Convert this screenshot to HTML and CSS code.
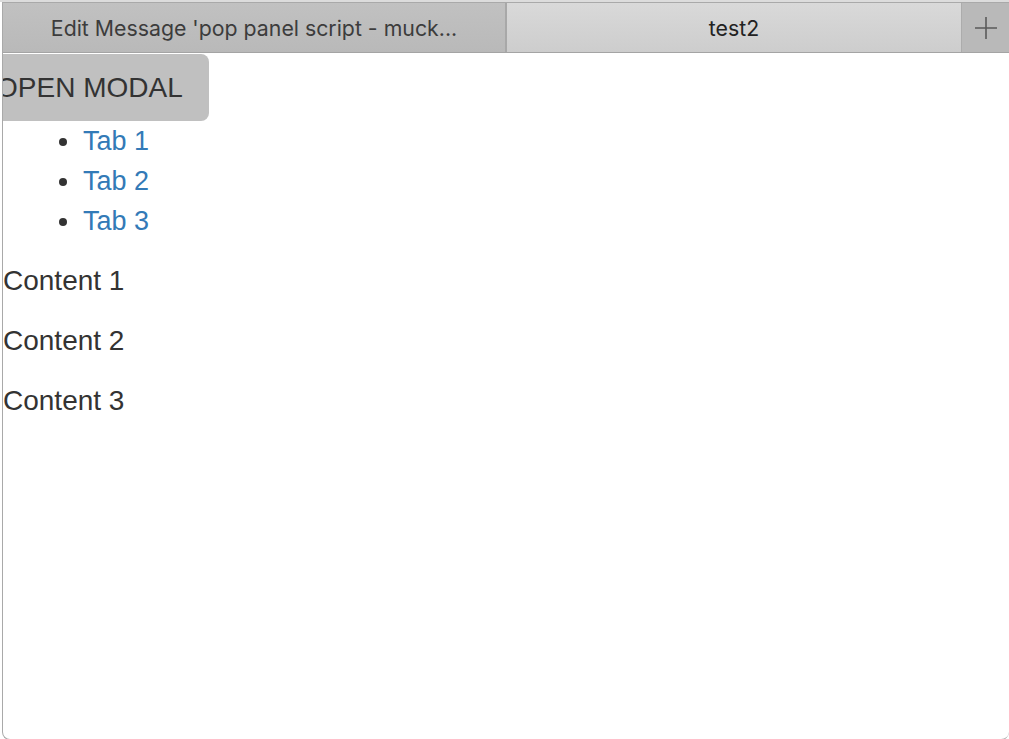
FILE: index.html
```html
<!DOCTYPE html>
<html>
<head>
<meta charset="utf-8">
<link rel="stylesheet" href="styles.css">
</head>
<body>
<div class="window">
  <div class="tabbar">
    <div class="tab tab-inactive">Edit Message 'pop panel script - muck...</div>
    <div class="tab tab-active">test2</div>
    <div class="tab-add">
      <svg width="24" height="24" viewBox="0 0 24 24"><path d="M12 1V23M1 12H23" stroke="#5a5a5a" stroke-width="1.6" fill="none"/></svg>
    </div>
  </div>
  <div class="content">
    <button class="open-modal">OPEN MODAL</button>
    <ul class="tab-list">
      <li><a href="#">Tab 1</a></li>
      <li><a href="#">Tab 2</a></li>
      <li><a href="#">Tab 3</a></li>
    </ul>
    <p class="pane">Content 1</p>
    <p class="pane">Content 2</p>
    <p class="pane">Content 3</p>
  </div>
</div>
</body>
</html>
```
FILE: styles.css
```css
html, body {
  margin: 0;
  padding: 0;
  background: #ffffff;
  height: 100%;
  overflow: hidden;
}
body {
  padding: 2px 0 0 2px;
  box-sizing: border-box;
  background: linear-gradient(#dcdcdc, #dcdcdc) top/100% 2px no-repeat, #fff;
}
.window {
  height: 736px;
  border: 1px solid #a9a9a9;
  border-right: none;
  border-radius: 0 0 8px 8px;
  background: #fff;
  overflow: hidden;
  display: flex;
  flex-direction: column;
  font-family: "Liberation Sans", Arial, sans-serif;
}
.tabbar {
  height: 49px;
  flex: none;
  display: flex;
  border-bottom: 1px solid #a4a4a4;
  font-family: Inter, "Noto Sans", sans-serif;
  font-size: 21.3px;
}
.tab {
  display: flex;
  align-items: center;
  justify-content: center;
  white-space: nowrap;
}
.tab-inactive {
  width: 502px;
  background: linear-gradient(#c1c1c1, #b9b9b9);
  color: #3c3c3c;
  border-right: 2px solid #a8a8a8;
}
.tab-active {
  width: 454px;
  background: linear-gradient(#d9d9d9, #cdcdcd);
  color: #222;
  border-right: 1px solid #acacac;
}
.tab-add {
  flex: 1;
  display: flex;
  align-items: center;
  justify-content: center;
  background: #b9b9b9;
}
.content {
  flex: 1;
  overflow: hidden;
  color: #333;
  font-size: 28px;
  padding-top: 1px;
}
.open-modal {
  display: block;
  margin: 0 0 0 -8px;
  height: 67px;
  padding: 0 26px 0 1px;
  border: none;
  border-radius: 0 8px 8px 0;
  background: #c0c0c0;
  color: #333;
  font-family: "Liberation Sans", Arial, sans-serif;
  font-size: 28px;
}
.tab-list {
  margin: 0;
  padding-left: 79px;
  line-height: 40px;
  font-size: 27px;
}
.tab-list li {
  padding-left: 1px;
}
.tab-list a {
  color: #337ab7;
  text-decoration: none;
}
.pane {
  margin: 20px 0;
  line-height: 40px;
}
```
